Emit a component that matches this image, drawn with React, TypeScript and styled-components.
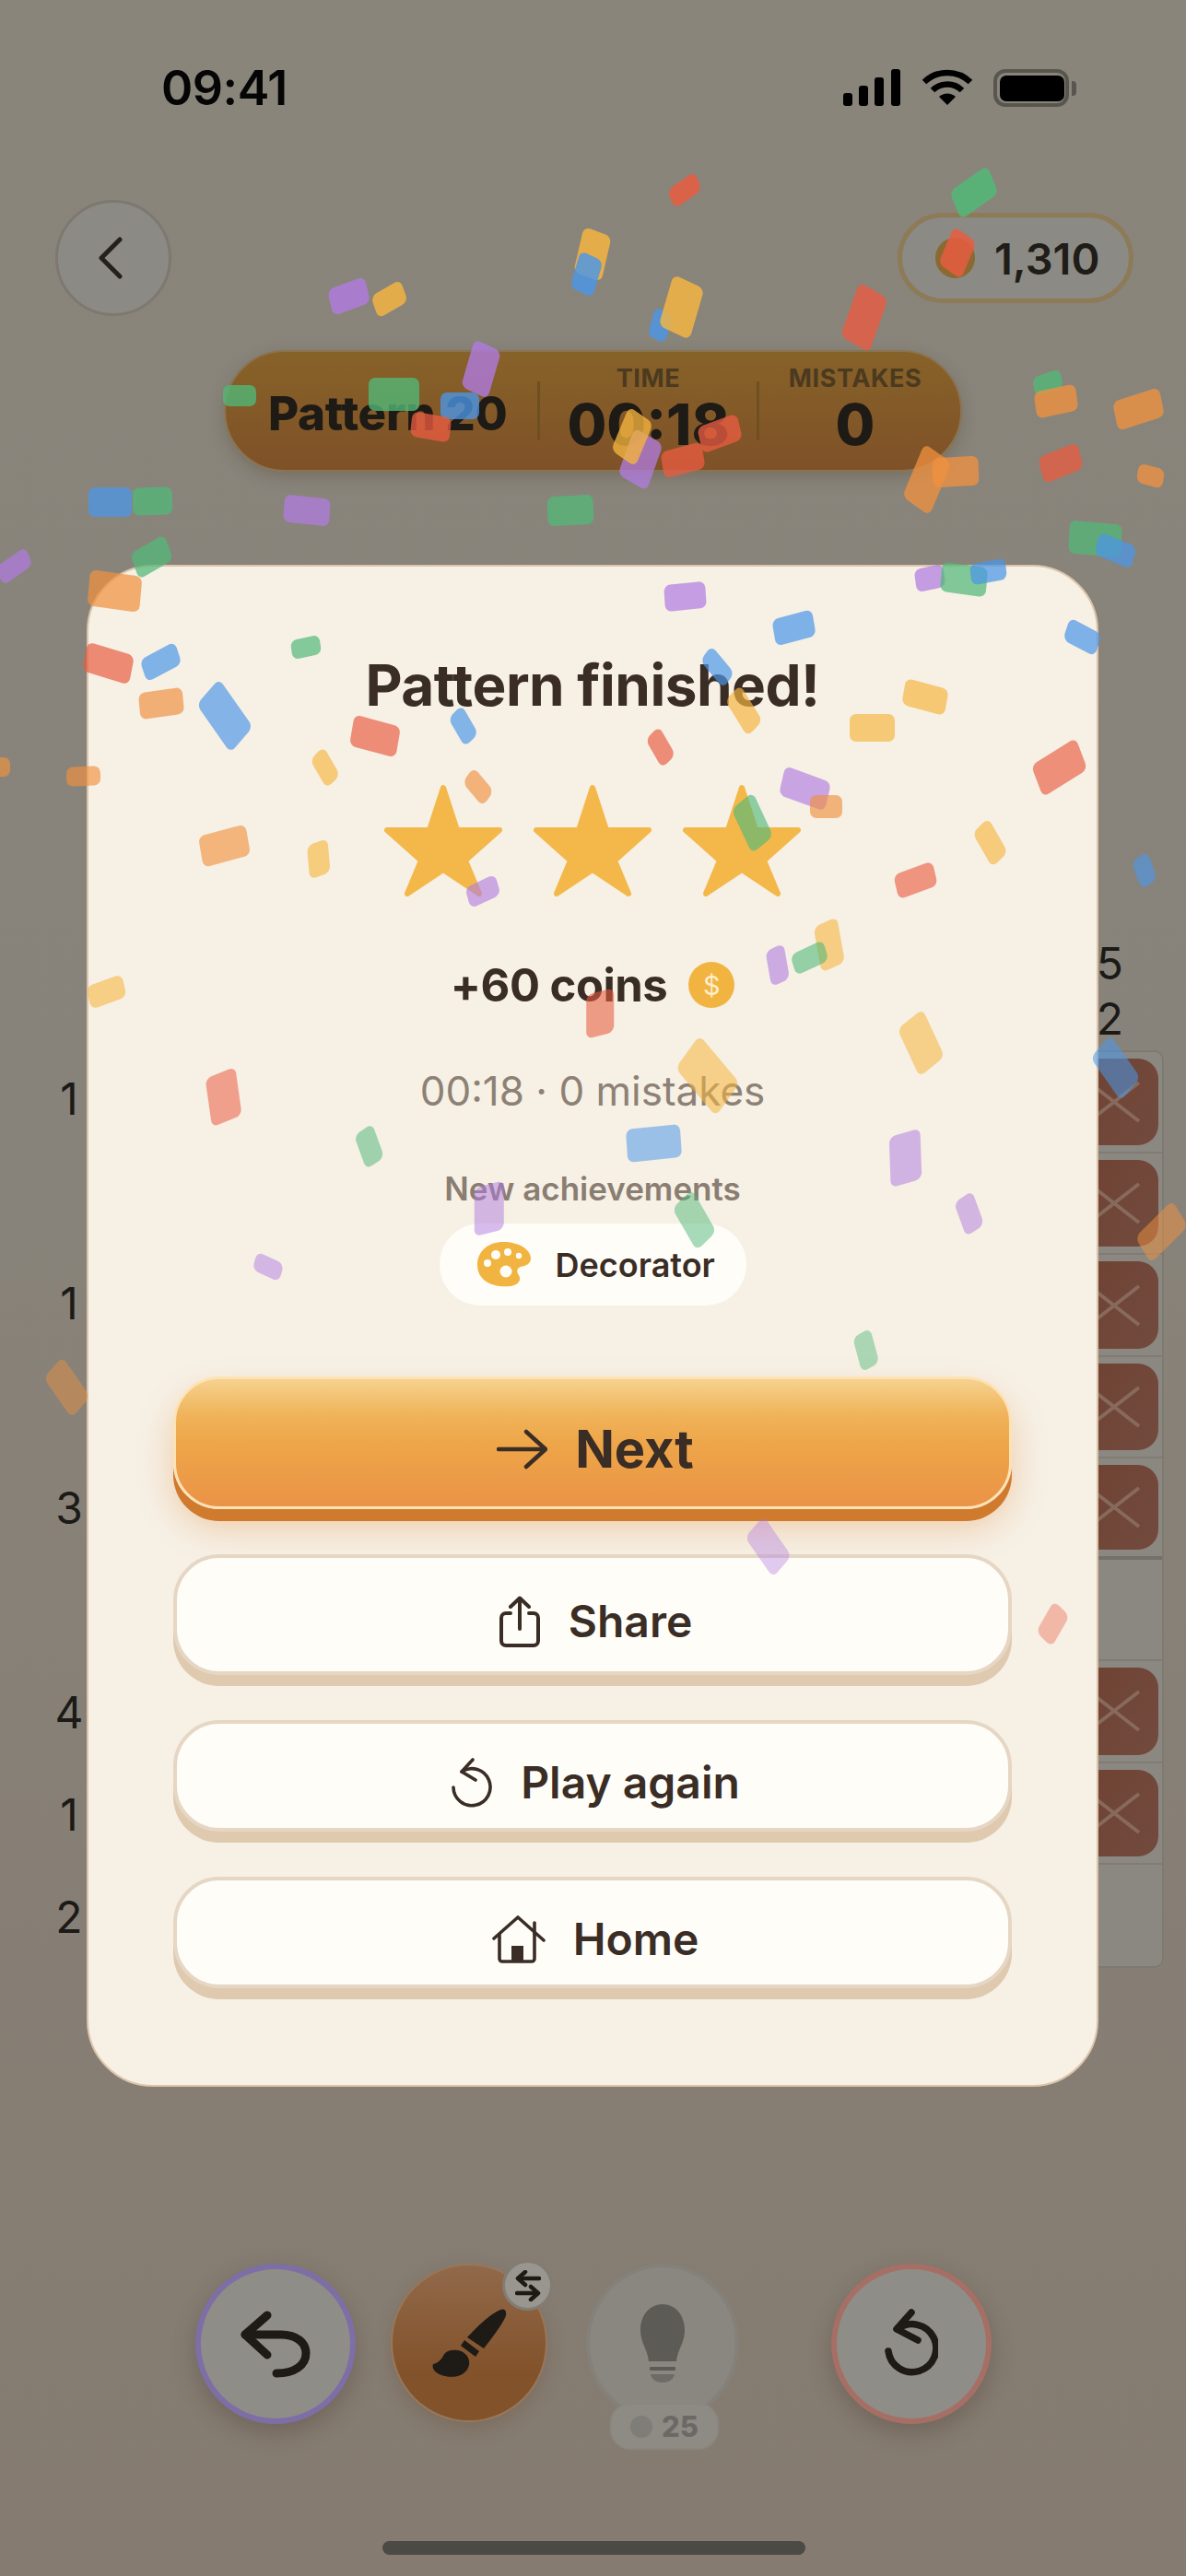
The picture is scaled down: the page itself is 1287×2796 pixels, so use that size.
import React from 'react';
import styled, { createGlobalStyle } from 'styled-components';

const GlobalStyle = createGlobalStyle`
  html, body {
    margin: 0;
    padding: 0;
    background: #867f75;
  }
  * {
    box-sizing: border-box;
  }
`;

const INK = '#3a2d26';
const FONT = `'Inter', 'Noto Sans', sans-serif`;

const Page = styled.div`
  position: relative;
  width: 1287px;
  height: 2796px;
  overflow: hidden;
  display: flex;
  flex-direction: column;
  font-family: ${FONT};
  background: linear-gradient(180deg, #89857b 0%, #88837a 45%, #857b70 100%);
`;

/* status bar */
const StatusBar = styled.div`
  height: 190px;
  padding: 0 119px 0 175px;
  display: flex;
  align-items: center;
  justify-content: space-between;
`;

const Clock = styled.div`
  font-size: 52px;
  font-weight: 600;
  letter-spacing: -0.5px;
  color: #050505;
`;

const StatusIcons = styled.div`
  display: flex;
  align-items: center;
  gap: 22px;
`;

const BatteryShell = styled.div`
  position: relative;
  width: 90px;
  height: 41px;
  padding: 7px 13px 6px 7px;
  &::before {
    content: '';
    position: absolute;
    inset: 0 8px 0 0;
    border: 4px solid #59564f;
    border-radius: 13px;
  }
  &::after {
    content: '';
    position: absolute;
    right: 0;
    top: 13px;
    width: 5px;
    height: 16px;
    border-radius: 0 4px 4px 0;
    background: #59564f;
  }
`;

const BatteryFill = styled.div`
  width: 100%;
  height: 100%;
  border-radius: 7px;
  background: #000;
`;

/* top bar */
const TopBar = styled.div`
  margin-top: 27px;
  height: 126px;
  padding: 0 57px 0 60px;
  display: flex;
  align-items: center;
  justify-content: space-between;
`;

const BackButton = styled.div`
  width: 126px;
  height: 126px;
  border-radius: 50%;
  border: 3px solid #7e7870;
  background: #8c8a84;
  display: flex;
  align-items: center;
  justify-content: center;
  padding-right: 6px;
`;

const CoinsPill = styled.div`
  width: 256px;
  height: 98px;
  border-radius: 49px;
  border: 5px solid #8d7a57;
  background: #8c8a84;
  display: flex;
  align-items: center;
  gap: 21px;
  padding-left: 36px;
  font-size: 47px;
  font-weight: 600;
  color: #201c18;
`;

const CoinDot = styled.div`
  width: 43px;
  height: 44px;
  border-radius: 50%;
  background: #8a6a30;
`;

/* HUD */
const HudRow = styled.div`
  margin-top: 37px;
  display: flex;
  justify-content: center;
`;

const Hud = styled.div`
  width: 801px;
  height: 132px;
  border-radius: 66px;
  border: 2px solid #8a7350;
  background: linear-gradient(180deg, #876228 0%, #7f5128 100%);
  box-shadow: 0 6px 16px rgba(70, 50, 30, 0.25);
  display: flex;
  align-items: center;
  color: #1e1a16;
`;

const HudTitle = styled.div`
  width: 338px;
  padding-left: 46px;
  font-size: 51px;
  font-weight: 800;
  white-space: nowrap;
  margin-top: 4px;
  letter-spacing: -0.3px;
`;

const HudDivider = styled.div`
  width: 3px;
  height: 64px;
  background: #6f4f22;
`;

const HudStat = styled.div<{ $width: number }>`
  width: ${({ $width }) => $width}px;
  display: flex;
  flex-direction: column;
  align-items: center;
`;

const HudLabel = styled.div`
  font-size: 27px;
  line-height: 30px;
  font-weight: 700;
  letter-spacing: 0.6px;
  color: #4b3a1f;
`;

const HudValue = styled.div`
  font-size: 62px;
  line-height: 70px;
  font-weight: 800;
`;

/* board behind the modal */
const Board = styled.div`
  margin-top: 504px;
  padding: 0 24px 0 30px;
  display: flex;
  flex-direction: column;
`;

const TopClues = styled.div`
  height: 124px;
  padding-right: 44px;
  display: flex;
  flex-direction: column;
  align-items: flex-end;
  font-size: 48px;
  line-height: 60px;
  color: #1c1a17;
`;

const BoardBody = styled.div`
  display: flex;
  height: 996px;
`;

const LeftClues = styled.div`
  width: 90px;
  display: grid;
  grid-template-rows: repeat(9, 111px);
`;

const LeftClue = styled.div`
  display: flex;
  align-items: center;
  justify-content: center;
  font-size: 48px;
  color: #1c1a17;
  margin-top: -6px;
`;

const Panel = styled.div`
  flex: 1;
  border: 2px solid #7e7a70;
  border-radius: 0 10px 10px 0;
  background: #8b8881;
  display: grid;
  grid-template-rows: repeat(9, 1fr);
`;

const PanelRow = styled.div<{ $thick: boolean }>`
  display: flex;
  justify-content: flex-end;
  padding: 7px 4px 7px 0;
  border-bottom: ${({ $thick }) => ($thick ? '4px solid #75706a' : '2px solid #807c74')};
  &:last-child {
    border-bottom: 0;
  }
`;

const XCell = styled.div`
  width: 120px;
  border-radius: 0 22px 22px 0;
  background: linear-gradient(120deg, #6e4030 0%, #724b3e 100%);
  display: flex;
  align-items: center;
  justify-content: flex-end;
  padding-right: 19px;
`;

/* bottom tools */
const Tools = styled.div`
  margin-top: 321px;
  padding-left: 212px;
  display: flex;
  align-items: flex-start;
`;

const RoundTool = styled.div<{ $ring: string; $gap: number }>`
  width: 174px;
  height: 174px;
  margin-right: ${({ $gap }) => $gap}px;
  border-radius: 50%;
  border: 6px solid ${({ $ring }) => $ring};
  background: #8f8d87;
  box-shadow: 0 10px 24px rgba(60, 48, 36, 0.28);
  display: flex;
  align-items: center;
  justify-content: center;
`;

const BrushTool = styled.div`
  position: relative;
  width: 170px;
  height: 172px;
  margin-right: 42px;
  border-radius: 50%;
  border: 2px solid #98765a;
  background: linear-gradient(180deg, #91694a 0%, #82522a 70%);
  box-shadow: 0 8px 20px rgba(90, 60, 30, 0.22);
  display: flex;
  align-items: center;
  justify-content: center;
`;

const SwapBadge = styled.div`
  position: absolute;
  top: -6px;
  right: -8px;
  width: 55px;
  height: 55px;
  border-radius: 50%;
  border: 3px solid #827c73;
  background: #99968f;
  display: flex;
  align-items: center;
  justify-content: center;
`;

const HintTool = styled.div`
  position: relative;
  width: 166px;
  height: 172px;
  margin-right: 100px;
  border-radius: 50%;
  border: 4px solid #84817a;
  background: #8a8780;
  display: flex;
  align-items: center;
  justify-content: center;
  padding-top: 2px;
`;

const HintCount = styled.div`
  position: absolute;
  left: 22px;
  top: 147px;
  width: 118px;
  height: 51px;
  border-radius: 22px;
  border: 2px solid #8a8781;
  background: #8e8b85;
  display: flex;
  align-items: center;
  justify-content: center;
  gap: 10px;
  font-size: 31px;
  font-weight: 800;
  color: #6b6965;
`;

const HintDot = styled.div`
  width: 24px;
  height: 24px;
  border-radius: 50%;
  background: #7f7d78;
`;

const HomeIndicator = styled.div`
  width: 459px;
  height: 15px;
  margin: 127px auto 0;
  transform: translateX(1px);
  border-radius: 8px;
  background: #4c4a45;
`;

/* modal */
const Modal = styled.div`
  position: absolute;
  left: 94px;
  top: 613px;
  width: 1098px;
  height: 1652px;
  padding: 89px 92px 0;
  border: 2px solid #dcc4aa;
  border-radius: 72px;
  background: #f6f0e5;
  display: flex;
  flex-direction: column;
  align-items: center;
`;

const Title = styled.div`
  font-size: 62px;
  line-height: 80px;
  font-weight: 700;
  letter-spacing: -0.5px;
  color: ${INK};
`;

const Stars = styled.div`
  margin-top: 67px;
  display: flex;
  gap: 34px;
`;

const Reward = styled.div`
  margin-top: 70px;
  height: 52px;
  display: flex;
  align-items: center;
  gap: 23px;
  font-size: 49px;
  font-weight: 700;
  letter-spacing: -0.5px;
  color: ${INK};
`;

const RewardCoin = styled.div`
  width: 50px;
  height: 50px;
  border-radius: 50%;
  background: #f2b441;
  display: flex;
  align-items: center;
  justify-content: center;
  font-size: 29px;
  font-weight: 400;
  color: #fdeecd;
`;

const Stats = styled.div`
  margin-top: 61px;
  font-size: 44px;
  line-height: 56px;
  font-weight: 400;
  color: #8d8176;
`;

const AchievementLabel = styled.div`
  margin-top: 56px;
  font-size: 35px;
  line-height: 44px;
  font-weight: 600;
  color: #8a7d72;
`;

const AchievementPill = styled.div`
  margin-top: 16px;
  width: 333px;
  height: 89px;
  border-radius: 45px;
  background: #fffdf8;
  display: flex;
  align-items: center;
  gap: 27px;
  padding-left: 41px;
  font-size: 36px;
  font-weight: 600;
  color: ${INK};
`;

const Actions = styled.div`
  margin-top: 77px;
  width: 100%;
  display: flex;
  flex-direction: column;
  gap: 49px;
`;

const PrimaryButton = styled.div`
  height: 144px;
  padding: 14px 0 0 6px;
  border-radius: 50px;
  border: 3px solid #fde2b6;
  background: linear-gradient(180deg, #f6d28f 0%, #f0b35a 28%, #eea548 52%, #ea9347 100%);
  box-shadow: 0 13px 0 #d07a2e, 0 20px 36px rgba(226, 138, 60, 0.35);
  display: flex;
  align-items: center;
  justify-content: center;
  gap: 30px;
  font-size: 56px;
  font-weight: 700;
  color: ${INK};
`;

const SecondaryButton = styled.div<{ $height: number }>`
  height: ${({ $height }) => $height}px;
  padding: 14px 0 0 6px;
  border-radius: 50px;
  border: 4px solid #e6d6c4;
  background: #fffdf8;
  box-shadow: 0 12px 0 #dfc9af;
  display: flex;
  align-items: center;
  justify-content: center;
  gap: 30px;
  font-size: 48px;
  font-weight: 600;
  color: ${INK};
`;

/* confetti */
const ConfettiLayer = styled.div`
  position: absolute;
  inset: 0;
  pointer-events: none;
`;

const Piece = styled.div<{ $x: number; $y: number; $w: number; $h: number; $r: number; $c: string; $o: number }>`
  position: absolute;
  left: ${({ $x, $w }) => $x - $w / 2}px;
  top: ${({ $y, $h }) => $y - $h / 2}px;
  width: ${({ $w }) => $w}px;
  height: ${({ $h }) => $h}px;
  border-radius: 7px;
  background: ${({ $c }) => $c};
  opacity: ${({ $o }) => $o};
  transform: rotate(${({ $r }) => $r}deg) skewX(${({ $r }) => Math.max(-14, Math.min(14, $r * 0.35))}deg);
`;

const R = '#e95c41';
const O = '#f0913f';
const Y = '#f6b63f';
const G = '#52b878';
const B = '#4b96e8';
const P = '#b07be0';

// x, y, w, h, rotation, colour - measured on the 722px wide view
const PIECES: [number, number, number, number, number, string][] = [
  [417, 116, 20, 12, -35, R], [593, 117, 28, 18, -35, G], [361, 155, 18, 28, 20, Y], [357, 167, 15, 23, 25, B],
  [212, 180, 24, 16, -20, P], [237, 182, 21, 14, -30, Y], [402, 198, 12, 18, 25, B], [415, 187, 21, 32, 25, Y],
  [526, 193, 20, 34, 30, R], [583, 154, 17, 24, 35, R], [293, 225, 18, 30, 25, P], [146, 241, 20, 13, 0, G], [240, 240, 31, 20, 0, G],
  [280, 247, 24, 16, 0, B], [262, 260, 24, 15, 10, R], [390, 280, 20, 30, 30, P], [416, 280, 26, 16, -15, R],
  [438, 264, 26, 16, -20, R], [385, 266, 18, 28, 35, Y], [582, 287, 28, 18, -3, O], [564, 292, 20, 34, 35, O],
  [638, 233, 18, 12, -20, G], [643, 244, 26, 16, -12, O], [693, 249, 30, 18, -18, O], [646, 282, 26, 16, -22, R],
  [700, 290, 16, 12, 15, O], [667, 328, 32, 20, 5, G], [679, 335, 24, 14, 22, B], [93, 305, 24, 17, -2, G],
  [67, 306, 26, 18, 0, B], [187, 311, 28, 17, 6, P], [347, 311, 28, 18, -3, G], [92, 339, 24, 16, -30, G],
  [9, 345, 22, 12, -35, P], [70, 360, 32, 22, 8, O], [566, 352, 18, 14, -12, P], [587, 353, 28, 18, 8, G],
  [602, 348, 22, 13, -10, B], [417, 363, 25, 16, -6, P], [483, 382, 25, 16, -15, B], [659, 388, 22, 14, 28, B],
  [66, 404, 30, 18, 17, R], [98, 403, 24, 14, -28, B], [186, 394, 18, 12, -12, G], [437, 406, 22, 11, 50, B],
  [98, 428, 27, 16, -8, O], [137, 436, 36, 20, 55, B], [563, 424, 27, 16, 15, Y], [531, 443, 28, 17, 0, Y],
  [453, 433, 26, 13, 58, Y], [282, 442, 20, 11, 60, B], [228, 448, 29, 19, 15, R], [402, 455, 20, 11, 60, R],
  [645, 467, 32, 20, -32, R], [198, 467, 20, 11, 60, Y], [291, 479, 19, 11, 50, O], [51, 473, 21, 12, -3, O],
  [0, 467, 12, 12, 0, O], [490, 480, 30, 18, 20, P], [503, 491, 20, 14, 0, O], [458, 501, 30, 16, 65, G],
  [603, 513, 24, 13, 60, Y], [137, 515, 30, 19, -15, O], [194, 523, 21, 13, 85, Y], [294, 543, 20, 13, -25, P],
  [557, 536, 25, 15, -20, R], [697, 530, 18, 11, 70, B], [505, 575, 28, 15, 80, Y], [493, 583, 22, 13, -25, G],
  [473, 588, 22, 12, 80, P], [65, 604, 23, 14, -20, Y], [365, 617, 27, 17, 90, R], [561, 635, 32, 19, 65, Y],
  [431, 655, 38, 24, 50, Y], [679, 650, 32, 18, 55, B], [136, 668, 30, 19, 82, R], [225, 698, 22, 13, 70, G],
  [398, 696, 33, 20, -6, B], [551, 705, 31, 19, 88, P], [590, 739, 22, 13, 70, P], [298, 736, 30, 18, 90, P],
  [423, 743, 30, 16, 60, G], [707, 750, 32, 18, -45, O], [163, 771, 18, 11, 25, P], [527, 822, 22, 12, 75, G],
  [41, 845, 30, 17, 55, O], [468, 942, 30, 17, 55, P], [641, 989, 22, 13, -60, R],
];

const SCALE = 1287 / 722;

const pieceOpacity = (y: number) => Math.max(0.35, 0.86 - (y - 100) * 0.00055);

const SignalIcon = () => (
  <svg width="63" height="40" viewBox="0 0 63 40" fill="#000">
    <rect x="0" y="26" width="10" height="14" rx="3" />
    <rect x="17" y="18" width="10" height="22" rx="3" />
    <rect x="34" y="9" width="10" height="31" rx="3" />
    <rect x="52" y="0" width="10" height="40" rx="3" />
  </svg>
);

const WifiIcon = () => (
  <svg width="56" height="40" viewBox="0 0 56 40" fill="none" stroke="#000" strokeWidth="6.5">
    <path d="M3 14 A36 36 0 0 1 53 14" />
    <path d="M12 23 A23 23 0 0 1 44 23" />
    <path d="M28 39 L19 30 A13 13 0 0 1 37 30 Z" fill="#000" stroke="none" />
  </svg>
);

const ChevronIcon = () => (
  <svg width="28" height="46" viewBox="0 0 28 46" fill="none" stroke="#25201b" strokeWidth="5" strokeLinecap="round" strokeLinejoin="round">
    <polyline points="24,3 4,23 24,43" />
  </svg>
);

const StarIcon = () => (
  <svg width="128" height="122" viewBox="0 0 128 122">
    <path
      fill="#f4b84a"
      stroke="#f4b84a"
      strokeWidth="6"
      strokeLinejoin="round"
      d="M64 4 L79 50 L125 50 L88 83 L103 119 L64 93 L25 119 L40 83 L3 50 L49 50 Z"
    />
  </svg>
);

const PaletteIcon = () => (
  <svg width="58" height="49" viewBox="0 0 58 49">
    <path
      fill="#f2b441"
      d="M28 0 C45 0 58 8 58 18 C58 24 52 26 47 27 C43 28 42 32 45 36 C48 41 45 47 36 48 C20 50 0 44 0 25 C0 10 12 0 28 0 Z"
    />
    <g fill="#fffdf8">
      <circle cx="20" cy="14" r="5" />
      <circle cx="33" cy="11" r="4" />
      <circle cx="45" cy="15" r="3.2" />
      <circle cx="11" cy="23" r="4" />
      <circle cx="31" cy="32" r="6.5" />
    </g>
  </svg>
);

const ArrowIcon = () => (
  <svg width="55" height="44" viewBox="0 0 55 44" fill="none" stroke={INK} strokeWidth="4.5" strokeLinecap="round" strokeLinejoin="round">
    <path d="M2 22 H52" />
    <polyline points="32,3 53,22 32,41" />
  </svg>
);

const ShareIcon = () => (
  <svg width="46" height="56" viewBox="0 0 46 56" fill="none" stroke={INK} strokeWidth="4" strokeLinecap="round" strokeLinejoin="round">
    <path d="M13 19 H8 a5 5 0 0 0 -5 5 V49 a5 5 0 0 0 5 5 H38 a5 5 0 0 0 5 -5 V24 a5 5 0 0 0 -5 -5 H33" />
    <path d="M23 3 V36" />
    <path d="M13 12 L23 2.5 L33 12" />
  </svg>
);

const ReplayIcon = () => (
  <svg width="46" height="54" viewBox="0 0 46 54" fill="none" stroke={INK} strokeWidth="3.6" strokeLinecap="round" strokeLinejoin="round">
    <path d="M24 2 L12 15 L27 24" />
    <path d="M12 15 A20 20 0 1 1 3 32" />
  </svg>
);

const HomeIcon = () => (
  <svg width="58" height="52" viewBox="0 0 58 52" fill="none" stroke={INK} strokeWidth="3.6" strokeLinecap="round" strokeLinejoin="round">
    <path d="M2 25 L28 2 L56 27" />
    <path d="M8 21 V47 a3 3 0 0 0 3 3 H43 a3 3 0 0 0 3 -3 V19" />
    <path d="M46 8 V20" />
    <rect x="21" y="33" width="13" height="17" fill={INK} stroke="none" />
  </svg>
);

const XMark = () => (
  <svg width="58" height="46" viewBox="0 0 58 46" stroke="#876a5c" strokeWidth="4">
    <path d="M2 2 L56 44 M56 2 L2 44" />
  </svg>
);

const UndoIcon = () => (
  <svg width="78" height="74" viewBox="0 0 78 74" fill="none" stroke="#1e1a16" strokeWidth="9" strokeLinecap="round" strokeLinejoin="round">
    <polyline points="30,6 6,27 30,49" />
    <path d="M6 27 H45 C62 27 72 36 72 47 C72 60 60 69 40 69" />
  </svg>
);

const BrushIcon = () => (
  <svg width="81" height="76" viewBox="0 0 81 76" fill="#1e1a16">
    <path d="M74 2 Q81 0 80 8 Q78 16 56 44 L38 32 Q60 8 74 2 Z" />
    <path d="M35 35 L51 47 L47 53 L31 41 Z" />
    <path d="M22 46 C32 44 42 52 40 62 C38 72 26 77 14 74 C4 72 -1 66 1 61 C6 60 10 56 12 52 C14 48 18 46 22 46 Z" />
  </svg>
);

const SwapIcon = () => (
  <svg width="28" height="34" viewBox="0 0 28 34" fill="none" stroke="#1e1a16" strokeWidth="4.5" strokeLinecap="round" strokeLinejoin="round">
    <path d="M26 9 H4" />
    <polyline points="11,2 3,9 11,16" />
    <path d="M2 25 H24" />
    <polyline points="17,18 25,25 17,32" />
  </svg>
);

const BulbIcon = () => (
  <svg width="48" height="86" viewBox="0 0 48 86" fill="#5c5b56">
    <path d="M24 0 C38 0 48 12 48 28 C48 42 40 50 39 62 H9 C8 50 0 42 0 28 C0 12 10 0 24 0 Z" />
    <rect x="10" y="68" width="28" height="4" rx="1" />
    <path d="M11 76 H37 C36 82 30 85 24 85 C18 85 12 82 11 76 Z" fill="#6c6b66" />
  </svg>
);

const RedoIcon = () => (
  <svg width="58" height="76" viewBox="0 0 58 76" fill="none" stroke="#1e1a16" strokeWidth="7.5" strokeLinecap="round" strokeLinejoin="round">
    <path d="M29 4 L13 22 L36 34" />
    <path d="M14 22 A26 26 0 1 1 4 46" />
  </svg>
);

const CLUES = ['1', '', '1', '', '3', '', '4', '1', '2'];
const MARKED = [true, true, true, true, true, false, true, true, false];

export default function App(): JSX.Element {
  return (
    <>
      <GlobalStyle />
      <Page>
        <StatusBar>
          <Clock>09:41</Clock>
          <StatusIcons>
            <SignalIcon />
            <WifiIcon />
            <BatteryShell>
              <BatteryFill />
            </BatteryShell>
          </StatusIcons>
        </StatusBar>

        <TopBar>
          <BackButton>
            <ChevronIcon />
          </BackButton>
          <CoinsPill>
            <CoinDot />
            1,310
          </CoinsPill>
        </TopBar>

        <HudRow>
          <Hud>
            <HudTitle>Pattern 20</HudTitle>
            <HudDivider />
            <HudStat $width={235}>
              <HudLabel>TIME</HudLabel>
              <HudValue>00:18</HudValue>
            </HudStat>
            <HudDivider />
            <HudStat $width={208}>
              <HudLabel>MISTAKES</HudLabel>
              <HudValue>0</HudValue>
            </HudStat>
          </Hud>
        </HudRow>

        <Board>
          <TopClues>
            <div>5</div>
            <div>2</div>
          </TopClues>
          <BoardBody>
            <LeftClues>
              {CLUES.map((clue, i) => (
                <LeftClue key={i}>{clue}</LeftClue>
              ))}
            </LeftClues>
            <Panel>
              {MARKED.map((marked, i) => (
                <PanelRow key={i} $thick={i === 4}>
                  {marked && (
                    <XCell>
                      <XMark />
                    </XCell>
                  )}
                </PanelRow>
              ))}
            </Panel>
          </BoardBody>
        </Board>

        <Tools>
          <RoundTool $ring="#7d6fa6" $gap={38}>
            <UndoIcon />
          </RoundTool>
          <BrushTool>
            <BrushIcon />
            <SwapBadge>
              <SwapIcon />
            </SwapBadge>
          </BrushTool>
          <HintTool>
            <BulbIcon />
            <HintCount>
              <HintDot />
              25
            </HintCount>
          </HintTool>
          <RoundTool $ring="#a66f65" $gap={0}>
            <RedoIcon />
          </RoundTool>
        </Tools>

        <HomeIndicator />

        <Modal>
          <Title>Pattern finished!</Title>
          <Stars>
            <StarIcon />
            <StarIcon />
            <StarIcon />
          </Stars>
          <Reward>
            +60 coins
            <RewardCoin>$</RewardCoin>
          </Reward>
          <Stats>00:18 · 0 mistakes</Stats>
          <AchievementLabel>New achievements</AchievementLabel>
          <AchievementPill>
            <PaletteIcon />
            Decorator
          </AchievementPill>
          <Actions>
            <PrimaryButton>
              <ArrowIcon />
              Next
            </PrimaryButton>
            <SecondaryButton $height={131}>
              <ShareIcon />
              Share
            </SecondaryButton>
            <SecondaryButton $height={121}>
              <ReplayIcon />
              Play again
            </SecondaryButton>
            <SecondaryButton $height={121}>
              <HomeIcon />
              Home
            </SecondaryButton>
          </Actions>
        </Modal>

        <ConfettiLayer>
          {PIECES.map(([x, y, w, h, r, c], i) => (
            <Piece
              key={i}
              $x={x * SCALE}
              $y={y * SCALE}
              $w={w * SCALE}
              $h={h * SCALE}
              $r={r}
              $c={c}
              $o={pieceOpacity(y)}
            />
          ))}
        </ConfettiLayer>
      </Page>
    </>
  );
}
